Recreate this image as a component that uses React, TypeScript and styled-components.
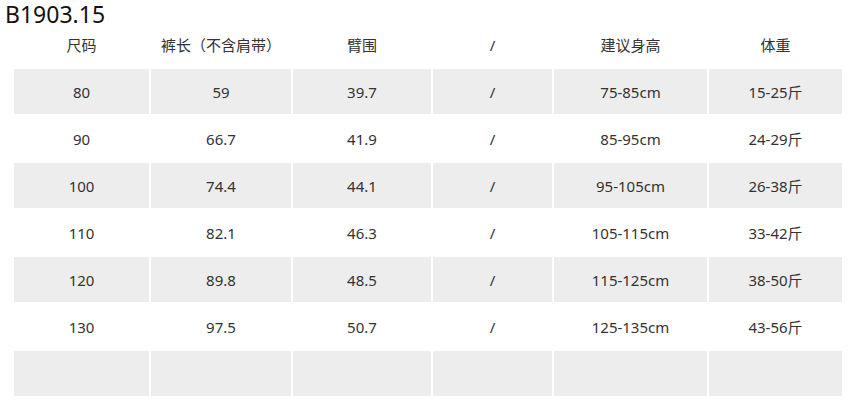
import React from "react";
import styled, { createGlobalStyle } from "styled-components";

const GlobalStyle = createGlobalStyle`
  html, body {
    margin: 0;
    padding: 0;
    background: #fff;
  }
  body {
    font-family: "Noto Sans", "Noto Sans CJK SC", sans-serif;
  }
`;

const columns = [135, 140, 138, 119, 153, 133];

const header = ["尺码", "裤长（不含肩带）", "臂围", "/", "建议身高", "体重"];

const rows: string[][] = [
  ["80", "59", "39.7", "/", "75-85cm", "15-25斤"],
  ["90", "66.7", "41.9", "/", "85-95cm", "24-29斤"],
  ["100", "74.4", "44.1", "/", "95-105cm", "26-38斤"],
  ["110", "82.1", "46.3", "/", "105-115cm", "33-42斤"],
  ["120", "89.8", "48.5", "/", "115-125cm", "38-50斤"],
  ["130", "97.5", "50.7", "/", "125-135cm", "43-56斤"],
  ["", "", "", "", "", ""],
];

const App = () => {
  return (
    <Page>
      <GlobalStyle />
      <Title>B1903.15</Title>
      <SizeTable>
        <colgroup>
          {columns.map((w, i) => (
            <col key={i} style={{ width: w }} />
          ))}
        </colgroup>
        <thead>
          <tr>
            {header.map((h, i) => (
              <HeadCell key={i}>{h}</HeadCell>
            ))}
          </tr>
        </thead>
        <tbody>
          {rows.map((r, i) => (
            <tr key={i}>
              {r.map((c, j) => (
                <Cell key={j} $shaded={i % 2 === 0}>
                  {c}
                </Cell>
              ))}
            </tr>
          ))}
        </tbody>
      </SizeTable>
    </Page>
  );
};

const Page = styled.div`
  width: 857px;
  height: 412px;
  overflow: hidden;
`;

const Title = styled.h1`
  margin: 0 0 -9px;
  padding-left: 5px;
  font-size: 23px;
  font-weight: 400;
  line-height: 29px;
  color: #111;
`;

const SizeTable = styled.table`
  position: relative;
  margin-left: 12px;
  width: 832px;
  table-layout: fixed;
  border-collapse: separate;
  border-spacing: 2px;
  font-size: 15px;
  color: #333;
`;

const HeadCell = styled.th`
  height: 45px;
  padding: 0;
  font-weight: 400;
  text-align: center;
  vertical-align: middle;
  white-space: nowrap;
`;

const Cell = styled.td<{ $shaded: boolean }>`
  height: 45px;
  padding: 0;
  text-align: center;
  vertical-align: middle;
  background: ${(p) => (p.$shaded ? "#ededed" : "transparent")};
`;

export default App;
